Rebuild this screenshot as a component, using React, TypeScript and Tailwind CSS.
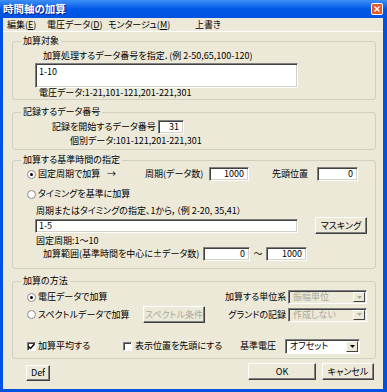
import React from 'react';

const font = "[font-family:'Noto_Sans_CJK_JP','Noto_Sans_CJK_SC',sans-serif] [font-feature-settings:'palt']";
const t = 'text-[9px] leading-[12px] whitespace-nowrap';

const Sunken: React.FC<{ w: string; h: string; right?: boolean; children?: React.ReactNode; top?: boolean }> = ({ w, h, right, children, top }) => (
  <div
    className={`${w} ${h} shrink-0 bg-white border border-t-[#808080] border-l-[#808080] border-r-white border-b-white shadow-[inset_1px_1px_0_#404040,inset_-1px_-1px_0_#d4d0c8] flex ${top ? 'items-start pt-[2px]' : 'items-center'} ${right ? 'justify-end pr-[4px]' : 'pl-[3px]'} ${t}`}
  >
    {children}
  </div>
);

const Button: React.FC<{ w: string; h: string; disabled?: boolean; children: React.ReactNode; cls?: string }> = ({ w, h, disabled, children, cls }) => (
  <div
    className={`${w} ${h} ${cls ?? ''} shrink-0 flex items-center justify-center bg-[#ece9d8] border border-t-white border-l-white border-r-[#404040] border-b-[#404040] shadow-[inset_-1px_-1px_0_#808080] ${t} ${disabled ? 'text-[#aca899]' : 'text-black'}`}
  >
    {children}
  </div>
);

const Radio: React.FC<{ checked?: boolean }> = ({ checked }) => (
  <svg width="9" height="9" viewBox="0 0 9 9" className="ml-[14px] shrink-0">
    <circle cx="4.5" cy="4.5" r="4" fill="#fff" stroke="#8a8a8a" strokeWidth="1" />
    {checked && <circle cx="4.5" cy="4.5" r="1.5" fill="#000" />}
  </svg>
);

const Check: React.FC<{ checked?: boolean; cls?: string }> = ({ checked, cls }) => (
  <div className={`${cls ?? ''} w-[9px] h-[9px] shrink-0 bg-white border border-t-[#808080] border-l-[#808080] border-r-white border-b-white shadow-[inset_1px_1px_0_#404040] flex items-center justify-center`}>
    {checked && (
      <svg width="7" height="7" viewBox="0 0 7 7">
        <path d="M0.5 3.5 L2.5 5.5 L6.5 1" stroke="#000" strokeWidth="1.4" fill="none" />
      </svg>
    )}
  </div>
);

const Combo: React.FC<{ w: string; h: string; value: string; disabled?: boolean }> = ({ w, h, value, disabled }) => (
  <div
    className={`${w} ${h} shrink-0 flex items-stretch border border-t-[#808080] border-l-[#808080] border-r-white border-b-white shadow-[inset_1px_1px_0_#404040] ${disabled ? 'bg-[#ece9d8] text-[#aca899]' : 'bg-white text-black'} ${t}`}
  >
    <div className="flex-1 flex items-center pl-[4px] overflow-hidden">{value}</div>
    <div className="w-[12px] my-[1px] mr-[1px] flex items-center justify-center bg-[#ece9d8] border border-t-white border-l-white border-r-[#404040] border-b-[#404040]">
      <svg width="5" height="3" viewBox="0 0 5 3">
        <path d="M0 0 H5 L2.5 3 Z" fill={disabled ? '#aca899' : '#000'} />
      </svg>
    </div>
  </div>
);

const Group: React.FC<{ title: string; cls: string; children: React.ReactNode }> = ({ title, cls, children }) => (
  <div className={`${cls} ml-[9px] w-[364px] border border-[#d0d0bf] rounded-[3px] flex flex-col`}>
    <div className={`-mt-[7px] ml-[8px] px-[2px] h-[12px] w-fit bg-[#ece9d8] ${t}`}>{title}</div>
    {children}
  </div>
);

const Txt: React.FC<{ cls: string; children: React.ReactNode }> = ({ cls, children }) => (
  <div className={`${cls} h-[12px] ${t}`}>{children}</div>
);

export default function App() {
  return (
    <div className={`${font} w-[387px] h-[392px] flex flex-col bg-[#0052e0] text-black`}>
      {/* title bar */}
      <div className="h-[18px] shrink-0 flex items-center bg-gradient-to-b from-[#3d8ff6] via-[#0058e8] to-[#0053e0] pl-[3px] pr-[3px]">
        <span className="text-white font-bold text-[10.5px] leading-[12px] [text-shadow:1px_1px_0_#0a1e8c]">時間軸の加算</span>
        <div className="ml-auto w-[12px] h-[12px] rounded-[2px] bg-[#e45a2c] border border-white flex items-center justify-center mb-[1px] mr-[1px]">
          <svg width="6" height="6" viewBox="0 0 6 6">
            <path d="M0.5 0.5 L5.5 5.5 M5.5 0.5 L0.5 5.5" stroke="#fff" strokeWidth="1.4" />
          </svg>
        </div>
      </div>

      <div className="flex-1 flex flex-col ml-[3px] mr-[4px] mb-[3px] bg-[#ece9d8]">
        {/* menu */}
        <div className={`h-[14px] shrink-0 flex items-center pl-[4px] border-b border-white ${t}`}>
          <span className="w-[40px]">編集(<span className="underline">E</span>)</span>
          <span className="w-[61px]">電圧データ(<span className="underline">D</span>)</span>
          <span className="w-[87px]">モンタージュ(<span className="underline">M</span>)</span>
          <span>上書き</span>
        </div>

        <Group title="加算対象" cls="mt-[9px] pb-[1px]">
          <Txt cls="mt-[3px] ml-[30px]">加算処理するデータ番号を指定．(例 2-50,65,100-120)</Txt>
          <div className="mt-[1px] ml-[22px]">
            <Sunken w="w-[263px]" h="h-[25px]" top>1-10</Sunken>
          </div>
          <div className="ml-[26px] h-[10px] text-[9px] leading-[10px] whitespace-nowrap">電圧データ:1-21,101-121,201-221,301</div>
        </Group>

        <Group title="記録するデータ番号" cls="mt-[12px] pb-[2px]">
          <div className={`mt-[2px] h-[14px] flex items-center ${t}`}>
            <span className="ml-[39px] w-[106px]">記録を開始するデータ番号</span>
            <Sunken w="w-[26px]" h="h-[14px]" right>31</Sunken>
          </div>
          <Txt cls="mt-[1px] ml-[57px]">個別データ:101-121,201-221,301</Txt>
        </Group>

        <Group title="加算する基準時間の指定" cls="mt-[10px] pb-[7px]">
          <div className={`mt-[1px] h-[14px] flex items-center ${t}`}>
            <Radio checked />
            <span className="ml-[2px] w-[69px]">固定周期で加算</span>
            <span className="w-[38px]">→</span>
            <span className="w-[64px]">周期(データ数)</span>
            <Sunken w="w-[40px]" h="h-[14px]" right>1000</Sunken>
            <span className="ml-[23px] w-[45px]">先頭位置</span>
            <Sunken w="w-[41px]" h="h-[14px]" right>0</Sunken>
          </div>
          <div className={`mt-[7px] h-[12px] flex items-center ${t}`}>
            <Radio />
            <span className="ml-[2px]">タイミングを基準に加算</span>
          </div>
          <Txt cls="mt-[5px] ml-[23px]">周期またはタイミングの指定、1から，（例 2-20, 35,41）</Txt>
          <div className="h-[17px] flex items-center">
            <div className="ml-[22px]">
              <Sunken w="w-[263px]" h="h-[14px]">1-5</Sunken>
            </div>
            <Button w="w-[52px]" h="h-[17px]" cls="ml-[17px]">マスキング</Button>
          </div>
          <Txt cls="mt-[1px] ml-[23px]">固定周期:1～10</Txt>
          <div className={`h-[14px] flex items-center ${t}`}>
            <span className="ml-[30px] w-[160px]">加算範囲(基準時間を中心に±データ数)</span>
            <Sunken w="w-[47px]" h="h-[14px]" right>0</Sunken>
            <span className="w-[16px] text-center">～</span>
            <Sunken w="w-[41px]" h="h-[14px]" right>1000</Sunken>
          </div>
        </Group>

        <Group title="加算の方法" cls="mt-[12px] pb-[5px]">
          <div className={`mt-[3px] h-[14px] flex items-center ${t}`}>
            <Radio checked />
            <span className="ml-[2px] w-[187px]">電圧データで加算</span>
            <span className="w-[63px] text-right pr-[2px]">加算する単位系</span>
            <Combo w="w-[79px]" h="h-[14px]" value="振幅単位" disabled />
          </div>
          <div className={`mt-[2px] h-[17px] flex items-center ${t}`}>
            <Radio />
            <span className="ml-[2px] w-[105px]">スペクトルデータで加算</span>
            <Button w="w-[62px]" h="h-[17px]" disabled>スペクトル条件</Button>
            <span className="w-[83px] text-right pr-[2px]">グランドの記録</span>
            <Combo w="w-[79px]" h="h-[14px]" value="作成しない" disabled />
          </div>
          <div className={`mt-[16px] h-[14px] flex items-center ${t}`}>
            <Check checked cls="ml-[14px]" />
            <span className="ml-[2px] w-[85px]">加算平均する</span>
            <Check />
            <span className="ml-[3px] w-[105px]">表示位置を先頭にする</span>
            <span className="w-[45px]">基準電圧</span>
            <Combo w="w-[75px]" h="h-[15px]" value="オフセット" />
          </div>
        </Group>

        {/* buttons */}
        <div className="mt-[4px] h-[18px] flex items-start">
          <Button w="w-[24px]" h="h-[16px]" cls="ml-[23px] mt-[2px]">Def</Button>
          <Button w="w-[68px]" h="h-[17px]" cls="ml-[198px]">OK</Button>
          <Button w="w-[52px]" h="h-[17px]" cls="ml-[6px]">キャンセル</Button>
        </div>
      </div>
    </div>
  );
}
